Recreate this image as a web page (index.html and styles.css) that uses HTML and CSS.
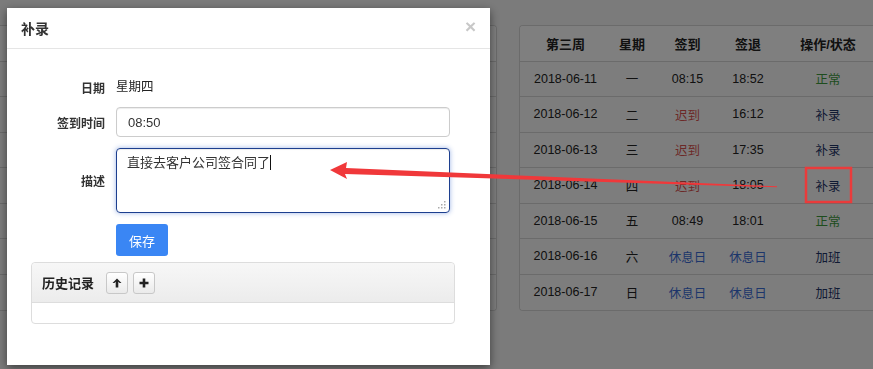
FILE: index.html
```html
<!DOCTYPE html>
<html lang="zh-CN">
<head>
    <meta charset="UTF-8">
    <title>考勤补录</title>
    <link rel="stylesheet" href="styles.css">
</head>
<body>
    <div class="page">
        <div class="panel panel-left">
            <table class="week">
                <thead><tr><th>第二周</th><th>星期</th><th>签到</th><th>签退</th><th>操作/状态</th></tr></thead>
                <tbody>
                    <tr><td></td><td></td><td></td><td></td><td></td></tr>
                    <tr><td></td><td></td><td></td><td></td><td></td></tr>
                    <tr><td></td><td></td><td></td><td></td><td></td></tr>
                    <tr><td></td><td></td><td></td><td></td><td></td></tr>
                    <tr><td></td><td></td><td></td><td></td><td></td></tr>
                    <tr><td></td><td></td><td></td><td></td><td></td></tr>
                    <tr><td></td><td></td><td></td><td></td><td></td></tr>
                </tbody>
            </table>
        </div>
        <div class="panel panel-right">
            <table class="week week-fixed">
                <colgroup>
                    <col class="c-date"><col class="c-day"><col class="c-in"><col class="c-out"><col class="c-op">
                </colgroup>
                <thead>
                    <tr><th>第三周</th><th>星期</th><th>签到</th><th>签退</th><th>操作/状态</th></tr>
                </thead>
                <tbody>
                    <tr><td>2018-06-11</td><td>一</td><td>08:15</td><td>18:52</td><td class="ok">正常</td></tr>
                    <tr><td>2018-06-12</td><td>二</td><td class="late">迟到</td><td>16:12</td><td class="link">补录</td></tr>
                    <tr><td>2018-06-13</td><td>三</td><td class="late">迟到</td><td>17:35</td><td class="link">补录</td></tr>
                    <tr><td>2018-06-14</td><td>四</td><td class="late">迟到</td><td>18:05</td><td class="link">补录</td></tr>
                    <tr><td>2018-06-15</td><td>五</td><td>08:49</td><td>18:01</td><td class="ok">正常</td></tr>
                    <tr><td>2018-06-16</td><td>六</td><td class="rest">休息日</td><td class="rest">休息日</td><td class="link">加班</td></tr>
                    <tr><td>2018-06-17</td><td>日</td><td class="rest">休息日</td><td class="rest">休息日</td><td class="link">加班</td></tr>
                </tbody>
            </table>
        </div>
    </div>

    <div class="backdrop"></div>

    <div class="modal">
        <div class="modal-header">
            <h4 class="modal-title">补录</h4>
            <span class="close">&times;</span>
        </div>
        <div class="modal-body">
            <div class="form">
                <label class="form-label">日期</label>
                <div class="form-static">星期四</div>

                <label class="form-label">签到时间</label>
                <input class="form-input" type="text" value="08:50">

                <label class="form-label">描述</label>
                <div class="form-textarea">直接去客户公司签合同了<span class="caret"></span>
                    <svg class="grip" width="8" height="8" viewBox="0 0 8 8">
                        <rect x="6" y="0" width="1.5" height="1.5"/>
                        <rect x="3" y="3" width="1.5" height="1.5"/>
                        <rect x="6" y="3" width="1.5" height="1.5"/>
                        <rect x="0" y="6" width="1.5" height="1.5"/>
                        <rect x="3" y="6" width="1.5" height="1.5"/>
                        <rect x="6" y="6" width="1.5" height="1.5"/>
                    </svg>
                </div>

                <span></span>
                <div><button class="btn-save">保存</button></div>
            </div>

            <div class="history">
                <div class="history-heading">
                    <span class="history-title">历史记录</span>
                    <button class="btn-icon" title="收起">
                        <svg width="10" height="10" viewBox="0 0 10 10"><path d="M5 0.5 L9.5 5 L7.6 5 L6.3 3.8 L6.3 9.5 L3.7 9.5 L3.7 3.8 L2.4 5 L0.5 5 Z"/></svg>
                    </button>
                    <button class="btn-icon" title="添加">
                        <svg width="10" height="10" viewBox="0 0 10 10"><path d="M3.7 0.5 H6.3 V3.7 H9.5 V6.3 H6.3 V9.5 H3.7 V6.3 H0.5 V3.7 H3.7 Z"/></svg>
                    </button>
                </div>
                <div class="history-body"></div>
            </div>
        </div>
    </div>

    <!-- screenshot annotation -->
    <svg class="annotation" width="873" height="369" viewBox="0 0 873 369">
        <polygon points="330,170 347,162 346,168 777,186.3 777,187.3 345,174 347,179" fill="#f0383a"/>
        <rect x="806" y="168" width="45" height="34" fill="none" stroke="#ea3b3b" stroke-width="2.5"/>
    </svg>
</body>
</html>
```

FILE: styles.css
```css
* {
    box-sizing: border-box;
}

body {
    margin: 0;
    font-family: 'Liberation Sans', 'Noto Sans CJK SC', sans-serif;
    font-size: 13px;
    color: #222;
    background: #f6f6f6;
    overflow: hidden;
}

/* page behind the dialog */
.page {
    display: flex;
    gap: 22px;
    padding-top: 25px;
}

.panel {
    flex: none;
    background: #fff;
    border: 1px solid #d6d6d6;
    border-radius: 4px;
    overflow: hidden;
}

.panel-left {
    width: 497px;
    border-left: none;
    border-radius: 0 4px 4px 0;
}

.panel-right {
    width: 363px;
    border-right: none;
    border-radius: 4px 0 0 4px;
}

.week {
    border-collapse: collapse;
    width: 100%;
}

.week-fixed {
    table-layout: fixed;
    width: 362px;
}

.week th {
    height: 35px;
    padding: 0;
    font-weight: bold;
    font-size: 13px;
    color: #222;
    text-align: center;
    white-space: nowrap;
    background: #fff;
}

.week td {
    height: 35.5px;
    padding: 0;
    border-top: 1px solid #d6d6d6;
    text-align: center;
    font-size: 12.5px;
    color: #222;
    background: #fbfbfb;
    white-space: nowrap;
}

.c-date { width: 91px; }
.c-day { width: 42px; }
.c-in { width: 69px; }
.c-out { width: 52px; }
.c-op { width: 108px; }

.week td.ok { color: #3d9a3d; }
.week td.late { color: #d9534f; }
.week td.link { color: #1f3468; }
.week td.rest { color: #3a6cd6; }

.backdrop {
    position: fixed;
    inset: 0;
    background: rgba(0, 0, 0, 0.5);
}

/* dialog */
.modal {
    position: fixed;
    left: 7px;
    top: 8px;
    width: 483px;
    height: 357px;
    background: #fff;
    box-shadow: 0 3px 9px rgba(0, 0, 0, 0.5);
}

.modal-header {
    display: flex;
    align-items: center;
    justify-content: space-between;
    height: 41px;
    padding: 0 14px 0 14px;
    border-bottom: 1px solid #e5e5e5;
}

.modal-title {
    margin: 0;
    font-size: 14px;
    font-weight: bold;
    color: #333;
}

.close {
    font-size: 19px;
    font-weight: bold;
    color: #c8c8c8;
    line-height: 1;
    margin-top: -4px;
}

.modal-body {
    padding: 29px 35px 0 24px;
}

.form {
    display: grid;
    grid-template-columns: 74px 334px;
    column-gap: 11px;
    row-gap: 11px;
    align-items: center;
}

.form-label {
    text-align: right;
    font-size: 12px;
    font-weight: bold;
    color: #333;
}

.form-static {
    height: 18px;
    line-height: 18px;
    font-size: 12.5px;
}

.form-input {
    height: 30px;
    padding: 0 11px;
    border: 1px solid #ccc;
    border-radius: 4px;
    font-family: inherit;
    font-size: 13px;
    color: #333;
    box-shadow: inset 0 1px 1px rgba(0, 0, 0, 0.075);
}

.form-textarea {
    position: relative;
    height: 65px;
    padding: 4px 10px;
    border: 1px solid #1d3f8f;
    border-radius: 4px;
    font-size: 13px;
    line-height: 20px;
    color: #333;
    box-shadow: inset 0 1px 1px rgba(0, 0, 0, 0.075), 0 0 5px rgba(40, 90, 200, 0.45);
}

.caret {
    display: inline-block;
    width: 1px;
    height: 15px;
    background: #111;
    vertical-align: -3px;
}

.grip {
    position: absolute;
    right: 3px;
    bottom: 3px;
    fill: #aaa;
}

.btn-save {
    width: 52px;
    height: 32px;
    border: none;
    border-radius: 3px;
    background: #3a86f4;
    color: #fff;
    font-family: inherit;
    font-size: 13px;
}

.history {
    margin-top: 6px;
    border: 1px solid #ddd;
    border-radius: 4px;
}

.history-heading {
    display: flex;
    align-items: center;
    gap: 5px;
    height: 40px;
    padding: 0 10px;
    background: linear-gradient(#f7f7f7, #ececec);
    border-bottom: 1px solid #ddd;
    border-radius: 4px 4px 0 0;
}

.history-title {
    font-size: 13px;
    font-weight: bold;
    margin-right: 7px;
}

.btn-icon {
    display: flex;
    align-items: center;
    justify-content: center;
    width: 22px;
    height: 22px;
    padding: 0;
    border: 1px solid #c8c8c8;
    border-radius: 3px;
    background: linear-gradient(#fff, #eaeaea);
}

.btn-icon svg {
    fill: #222;
}

.history-body {
    height: 20px;
}

.annotation {
    position: fixed;
    left: 0;
    top: 0;
    pointer-events: none;
}
```
